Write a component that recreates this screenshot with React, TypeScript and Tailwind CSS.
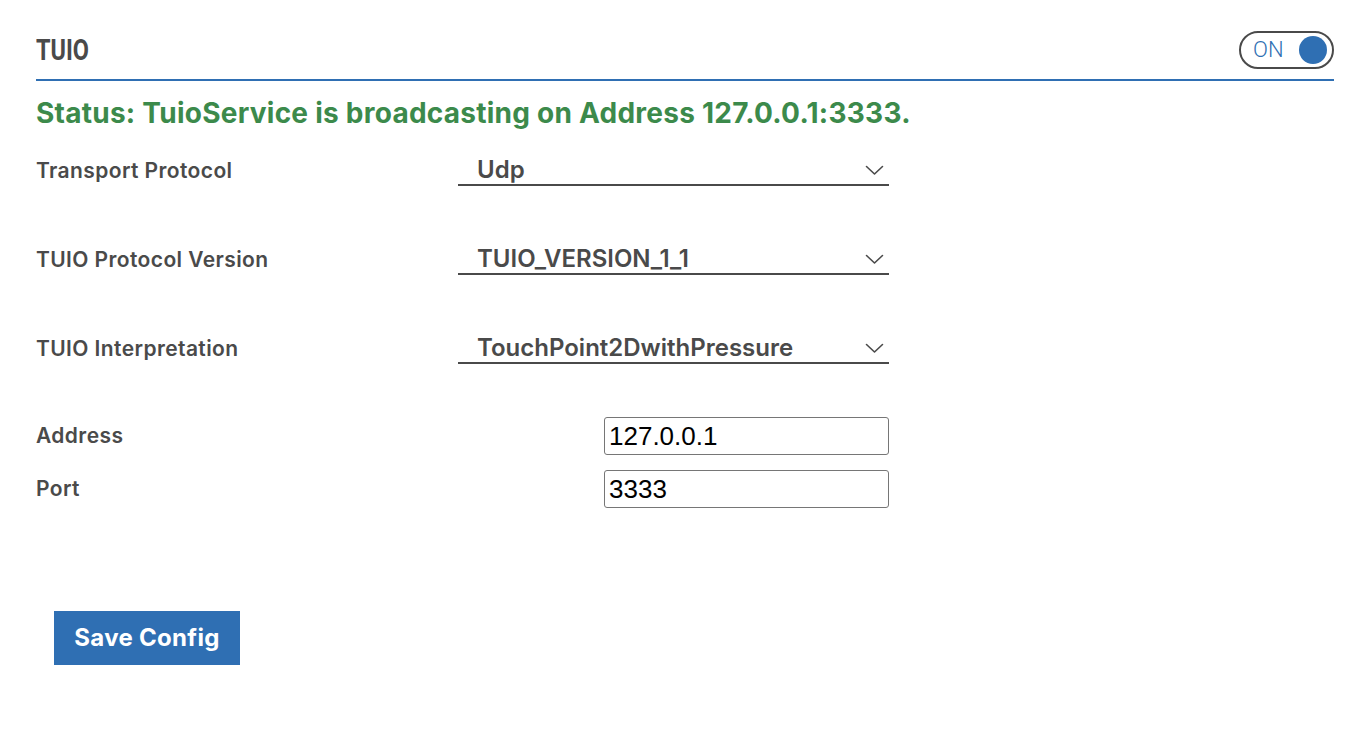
import { useState } from "react"

const selects = [
  { label: "Transport Protocol", value: "Udp", options: ["Udp", "Websocket"] },
  { label: "TUIO Protocol Version", value: "TUIO_VERSION_1_1", options: ["TUIO_VERSION_1_1", "TUIO_VERSION_2"] },
  { label: "TUIO Interpretation", value: "TouchPoint2DwithPressure", options: ["TouchPoint2DwithPressure", "Marker"] },
]

function Chevron() {
  return (
    <svg width="19" height="11" viewBox="0 0 19 11" fill="none" className="shrink-0">
      <polyline points="1.5,1.5 9.5,9 17.5,1.5" stroke="#4a4a4a" strokeWidth="1.6" strokeLinecap="round" strokeLinejoin="round" />
    </svg>
  )
}

export default function App() {
  const [on, setOn] = useState(true)

  return (
    <div className="min-h-screen bg-white pl-[36px] pr-[20px] pt-[31px] text-[#4a4a4a] font-['Inter',sans-serif]">
      {/* Header */}
      <div className="flex items-center justify-between border-b-2 border-[#2f6fb3] pb-[10px]">
        <h1 className="origin-left scale-x-[0.78] text-[30px] font-bold leading-none font-['Roboto',sans-serif]">
          TUIO
        </h1>
        <button
          onClick={() => setOn(!on)}
          className="flex h-[38px] w-[95px] items-center justify-between rounded-full border-2 border-[#4a4a4a] pl-[12px] pr-[5px]"
        >
          <span className="text-[22px] font-light leading-none text-[#2f6fb3] font-['Roboto',sans-serif]">ON</span>
          <span className="h-[28px] w-[28px] rounded-full bg-[#2f6fb3]" />
        </button>
      </div>

      <p className="mt-[15px] text-[28px] font-bold leading-[34px] tracking-[0.25px] text-[#3c8a4b]">
        Status: TuioService is broadcasting on Address 127.0.0.1:3333.
      </p>

      {/* Selects */}
      <div className="mt-[26px] flex flex-col gap-[59px]">
        {selects.map((s) => (
          <div key={s.label} className="flex h-[30px] items-center">
            <span className="w-[422px] text-[21px] font-semibold leading-[30px] tracking-[0.4px]">{s.label}</span>
            <div className="flex h-[30px] w-[431px] items-center justify-between border-b-2 border-[#4a4a4a] pl-[19px] pr-[5px]">
              <span className="text-[24px] font-semibold leading-none">{s.value}</span>
              <Chevron />
            </div>
          </div>
        ))}
      </div>

      {/* Inputs */}
      <div className="mt-[53px] flex flex-col gap-[15px]">
        {[
          { label: "Address", value: "127.0.0.1" },
          { label: "Port", value: "3333" },
        ].map((f) => (
          <div key={f.label} className="flex items-center">
            <span className="w-[422px] text-[21px] font-semibold leading-[30px] tracking-[0.4px]">{f.label}</span>
            <div className="flex w-[431px] justify-end">
              <input
                defaultValue={f.value}
                className="h-[38px] w-[285px] rounded-[3px] border border-[#767676] px-[4px] text-[26px] text-black font-['Liberation_Sans',Arial,sans-serif] outline-none"
              />
            </div>
          </div>
        ))}
      </div>

      <button className="ml-[18px] mt-[103px] h-[54px] w-[186px] bg-[#2f6fb3] text-[24px] font-bold tracking-[0.3px] text-white">
        Save Config
      </button>
    </div>
  )
}
